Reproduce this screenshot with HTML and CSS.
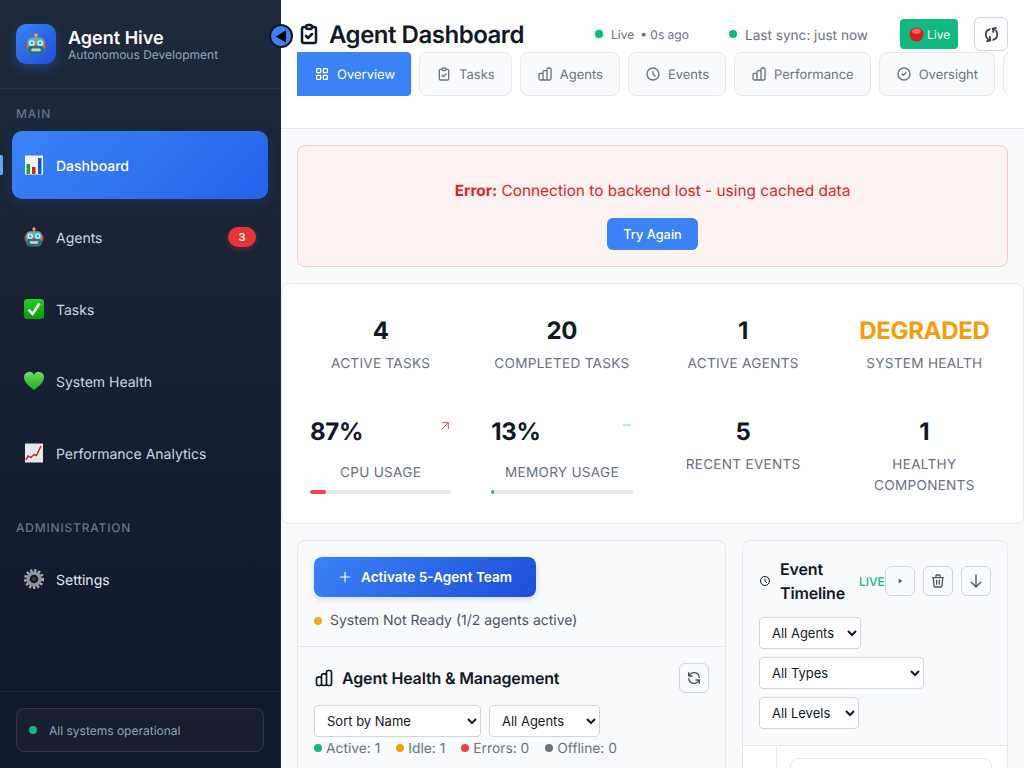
FILE: index.html

```html
<!DOCTYPE html>
<html lang="en">
<head>
  <meta charset="UTF-8" />
  <meta name="viewport" content="width=device-width, initial-scale=1" />
  <title>Agent Hive</title>
  <link rel="stylesheet" href="styles.css">
</head>
<body>

<svg class="defs" width="0" height="0">
  <linearGradient id="g-check" x1="0" y1="0" x2="0" y2="1"><stop offset="0" stop-color="#22cf22"/><stop offset="1" stop-color="#0a9a0a"/></linearGradient>
  <linearGradient id="g-heart" x1="0" y1="0" x2="0" y2="1"><stop offset="0" stop-color="#6fdc5a"/><stop offset="1" stop-color="#25a82a"/></linearGradient>
  <symbol id="robot" viewBox="0 0 24 24">
    <rect x="0.6" y="10" width="3" height="7" rx="1" fill="#b8442f"/>
    <rect x="20.4" y="10" width="3" height="7" rx="1" fill="#b8442f"/>
    <rect x="11" y="2.5" width="2" height="3" fill="#8a9aa3"/>
    <circle cx="12" cy="2.4" r="2" fill="#f0a030"/>
    <rect x="2.5" y="5" width="19" height="18" rx="5" fill="#6fa8ad"/>
    <rect x="2.5" y="14" width="19" height="9" rx="5" fill="#2f6f7c"/>
    <circle cx="7.5" cy="11" r="3.2" fill="#d8f0f5"/>
    <circle cx="16.5" cy="11" r="3.2" fill="#d8f0f5"/>
    <circle cx="7.5" cy="11" r="1.6" fill="#1fa8d8"/>
    <circle cx="16.5" cy="11" r="1.6" fill="#1fa8d8"/>
    <path d="M12 12l1.6 2.4h-3.2z" fill="#d8453a"/>
    <rect x="7" y="17" width="10" height="3" rx="1" fill="#c9d6d9"/>
  </symbol>
  <symbol id="i-clip" viewBox="0 0 24 24"><path d="M9 5H7a2 2 0 00-2 2v12a2 2 0 002 2h10a2 2 0 002-2V7a2 2 0 00-2-2h-2M9 5a2 2 0 002 2h2a2 2 0 002-2M9 5a2 2 0 012-2h2a2 2 0 012 2m-6 9l2 2 4-4"/></symbol>
  <symbol id="i-bars" viewBox="0 0 24 24"><path d="M9 19v-6a2 2 0 00-2-2H5a2 2 0 00-2 2v6a2 2 0 002 2h2a2 2 0 002-2zm0 0V9a2 2 0 012-2h2a2 2 0 012 2v10m-6 0a2 2 0 002 2h2a2 2 0 002-2m0 0V5a2 2 0 012-2h2a2 2 0 012 2v14a2 2 0 01-2 2h-2a2 2 0 01-2-2z"/></symbol>
  <symbol id="i-clock" viewBox="0 0 24 24"><path d="M12 8v4l3 3m6-3a9 9 0 11-18 0 9 9 0 0118 0z"/></symbol>
  <symbol id="i-check" viewBox="0 0 24 24"><path d="M9 12l2 2 4-4m6 2a9 9 0 11-18 0 9 9 0 0118 0z"/></symbol>
  <symbol id="i-refresh" viewBox="0 0 24 24"><path d="M4 4v5h.582m15.356 2A8.001 8.001 0 004.582 9m0 0H9m11 11v-5h-.581m0 0a8.003 8.003 0 01-15.357-2m15.357 2H15"/></symbol>
  <symbol id="i-grid" viewBox="0 0 24 24"><path d="M4 5a1 1 0 011-1h4a1 1 0 011 1v4a1 1 0 01-1 1H5a1 1 0 01-1-1V5zM14 5a1 1 0 011-1h4a1 1 0 011 1v4a1 1 0 01-1 1h-4a1 1 0 01-1-1V5zM4 15a1 1 0 011-1h4a1 1 0 011 1v4a1 1 0 01-1 1H5a1 1 0 01-1-1v-4zM14 15a1 1 0 011-1h4a1 1 0 011 1v4a1 1 0 01-1 1h-4a1 1 0 01-1-1v-4z"/></symbol>
</svg>

<div class="app">
  <aside class="sidebar">
    <div class="brand">
      <div class="brand-logo"><svg class="emoji-logo"><use href="#robot"/></svg></div>
      <div class="brand-text">
        <div class="brand-name">Agent Hive</div>
        <div class="brand-sub">Autonomous Development</div>
      </div>
    </div>

    <nav class="nav">
      <div class="nav-title">MAIN</div>
      <a class="nav-item active">
        <svg class="emoji" viewBox="0 0 20 20">
          <rect x="1" y="0.5" width="18" height="19" fill="#f4f6f8"/>
          <rect x="2.5" y="9" width="3.5" height="10" fill="#16a82e"/>
          <rect x="8" y="12" width="3.5" height="7" fill="#d3201c"/>
          <rect x="14" y="3" width="3.5" height="16" fill="#1258b8"/>
        </svg>
        <span class="nav-label">Dashboard</span>
      </a>
      <a class="nav-item">
        <svg class="emoji"><use href="#robot"/></svg>
        <span class="nav-label">Agents</span>
        <span class="nav-badge">3</span>
      </a>
      <a class="nav-item">
        <svg class="emoji" viewBox="0 0 20 20">
          <rect x="0" y="0" width="20" height="20" rx="3" fill="url(#g-check)"/>
          <path d="M4.5 10.500l4 4.500 7-10.500" fill="none" stroke="#fff" stroke-width="2.600"/>
        </svg>
        <span class="nav-label">Tasks</span>
      </a>
      <a class="nav-item">
        <svg class="emoji" viewBox="0 0 20 20">
          <path d="M10 19C4 14.500 0 11 0 6a5.200 5.200 0 0 1 10-2 5.200 5.200 0 0 1 10 2c0 5-4 8.500-10 13z" fill="url(#g-heart)"/>
        </svg>
        <span class="nav-label">System Health</span>
      </a>
      <a class="nav-item">
        <svg class="emoji" viewBox="0 0 20 20">
          <rect x="1" y="0.500" width="18" height="19" fill="#e6e9ec"/>
          <path d="M2 17l2-4 3 1.500 3-3 2.500 1L17 3" fill="none" stroke="#c4201c" stroke-width="1.400"/>
        </svg>
        <span class="nav-label">Performance Analytics</span>
      </a>
      <div class="nav-title nav-title-admin">ADMINISTRATION</div>
      <a class="nav-item nav-item-light">
        <svg class="emoji" viewBox="0 0 20 20">
          <circle cx="10" cy="10" r="8.500" fill="none" stroke="#a9adb1" stroke-width="3" stroke-dasharray="2.200 1.800"/>
          <circle cx="10" cy="10" r="6" fill="none" stroke="#8f9498" stroke-width="3.500"/>
          <circle cx="10" cy="10" r="2" fill="#3b3f44"/>
        </svg>
        <span class="nav-label">Settings</span>
      </a>
    </nav>

    <div class="side-foot">
      <div class="sys-status"><i class="sys-dot"></i>All systems operational</div>
    </div>
  </aside>

  <button class="collapse"><svg class="collapse-arrow" viewBox="0 0 11 14"><path d="M11 0v14L0 7z"/></svg></button>

  <main class="main">
    <header class="top">
      <div class="top-row">
        <svg class="ico title-ico"><use href="#i-clip"/></svg>
        <h1>Agent Dashboard</h1>
        <div class="live-state"><i class="dot-green glow"></i>Live<span class="ago">&bull; 0s ago</span></div>
        <div class="sync"><i class="dot-green"></i><span class="sync-text">Last sync: just now</span></div>
        <div class="live-pill">
          <svg class="red-ball" viewBox="0 0 16 16"><circle cx="8" cy="8" r="7.500" fill="#d81f1f"/><ellipse cx="8" cy="4.500" rx="4.500" ry="2.800" fill="#f56a5f"/></svg>
          Live
        </div>
        <button class="icon-btn sync-btn"><svg class="ico sync-ico"><use href="#i-refresh"/></svg></button>
      </div>
      <div class="tabs">
        <a class="tab active"><svg class="ico"><use href="#i-grid"/></svg>Overview</a>
        <a class="tab"><svg class="ico"><use href="#i-clip"/></svg>Tasks</a>
        <a class="tab"><svg class="ico"><use href="#i-bars"/></svg>Agents</a>
        <a class="tab"><svg class="ico"><use href="#i-clock"/></svg>Events</a>
        <a class="tab"><svg class="ico"><use href="#i-bars"/></svg>Performance</a>
        <a class="tab"><svg class="ico"><use href="#i-check"/></svg>Oversight</a>
        <a class="tab tab-last"></a>
      </div>
    </header>

    <section class="error-box">
      <p><strong>Error:</strong> Connection to backend lost - using cached data</p>
      <button class="btn-retry">Try Again</button>
    </section>

    <section class="stats">
      <div class="stat"><div class="stat-value">4</div><div class="stat-label">ACTIVE TASKS</div></div>
      <div class="stat"><div class="stat-value">20</div><div class="stat-label">COMPLETED TASKS</div></div>
      <div class="stat"><div class="stat-value">1</div><div class="stat-label">ACTIVE AGENTS</div></div>
      <div class="stat"><div class="stat-value amber">DEGRADED</div><div class="stat-label">SYSTEM HEALTH</div></div>

      <div class="stat">
        <div class="stat-head">
          <div class="stat-value">87%</div>
          <svg class="trend trend-up" viewBox="6 6 12 12"><path d="M7 17L17 7M7 7h10v10"/></svg>
        </div>
        <div class="stat-label meter-label">CPU USAGE</div>
        <div class="meter"><div class="meter-fill red" style="width: 11%"></div></div>
      </div>
      <div class="stat">
        <div class="stat-head">
          <div class="stat-value">13%</div>
          <svg class="trend trend-flat" viewBox="3 3 18 18"><path d="M3 12h18"/></svg>
        </div>
        <div class="stat-label meter-label">MEMORY USAGE</div>
        <div class="meter"><div class="meter-fill green" style="width: 2%"></div></div>
      </div>
      <div class="stat"><div class="stat-value">5</div><div class="stat-label">RECENT EVENTS</div></div>
      <div class="stat"><div class="stat-value">1</div><div class="stat-label">HEALTHY COMPONENTS</div></div>
    </section>

    <section class="panels">
      <div class="panel">
        <div class="activate">
          <button class="btn-activate"><svg class="ico" viewBox="0 0 24 24"><path d="M12 4v16m8-8H4"/></svg>Activate 5-Agent Team</button>
          <div class="ready"><i class="dot amber-bg"></i>System Not Ready (1/2 agents active)</div>
        </div>
        <div class="health">
          <div class="health-head">
            <svg class="ico health-ico"><use href="#i-bars"/></svg>
            <h2>Agent Health &amp; Management</h2>
            <button class="icon-btn small"><svg class="ico"><use href="#i-refresh"/></svg></button>
          </div>
          <div class="filters">
            <select class="sel sel-sort"><option>Sort by Name</option></select>
            <select class="sel sel-agents"><option>All Agents</option></select>
          </div>
          <div class="legend">
            <span><i class="dot green-bg"></i>Active: 1</span>
            <span><i class="dot amber-bg2"></i>Idle: 1</span>
            <span><i class="dot red-bg"></i>Errors: 0</span>
            <span><i class="dot gray-bg"></i>Offline: 0</span>
          </div>
        </div>
      </div>

      <div class="panel">
        <div class="timeline-head">
          <div class="timeline-top">
            <svg class="ico timeline-ico"><use href="#i-clock"/></svg>
            <h2>Event Timeline</h2>
            <span class="live-tag">LIVE</span>
            <div class="timeline-btns">
              <button class="icon-btn small"><svg class="play" viewBox="0 0 24 24"><path d="M8 5l11 7-11 7z"/></svg></button>
              <button class="icon-btn small"><svg class="ico" viewBox="0 0 24 24"><path d="M19 7l-.867 12.142A2 2 0 0116.138 21H7.862a2 2 0 01-1.995-1.858L5 7m5 4v6m4-6v6m1-10V4a1 1 0 00-1-1h-4a1 1 0 00-1 1v3M4 7h16"/></svg></button>
              <button class="icon-btn small"><svg class="ico" viewBox="0 0 24 24"><path d="M19 14l-7 7m0 0l-7-7m7 7V3"/></svg></button>
            </div>
          </div>
          <select class="sel sel-tl-agents"><option>All Agents</option></select>
          <select class="sel sel-tl-types"><option>All Types</option></select>
          <select class="sel sel-tl-levels"><option>All Levels</option></select>
        </div>
        <div class="timeline-body">
          <div class="event-card"></div>
        </div>
      </div>
    </section>
  </main>
</div>

</body>
</html>
```

FILE: styles.css

```css
* {
  box-sizing: border-box;
}
html, body {
  margin: 0;
  height: 100%;
  overflow: hidden;
}
body {
  font-family: Inter, "Noto Sans", sans-serif;
  text-rendering: geometricPrecision;
  background-color: #f9fafb;
  color: #111827;
}
.defs {
  position: absolute;
}
.app {
  display: flex;
  height: 768px;
  overflow: hidden;
}

/* sidebar */
.sidebar {
  width: 281px;
  flex: none;
  height: 768px;
  display: flex;
  flex-direction: column;
  background: linear-gradient(180deg, #1e293b 0%, #0f172a 100%);
  border-right: 1px solid #1e293b;
}
.brand {
  height: 89px;
  flex: none;
  display: flex;
  align-items: center;
  gap: 12px;
  padding: 0 16px;
  border-bottom: 1px solid rgba(255, 255, 255, 0.07);
}
.brand-logo {
  width: 40px;
  height: 40px;
  border-radius: 10px;
  display: flex;
  align-items: center;
  justify-content: center;
  background: linear-gradient(135deg, #3b82f6, #1d4ed8);
  box-shadow: 0 4px 12px rgba(59, 130, 246, 0.3);
}
.emoji-logo {
  width: 22px;
  height: 22px;
}
.brand-text {
  padding-top: 2px;
}
.brand-name {
  font-size: 18px;
  line-height: 20px;
  font-weight: 600;
  color: #fff;
}
.brand-sub {
  font-size: 12px;
  line-height: 12px;
  color: #94a3b8;
}
.nav {
  flex: 1;
  padding: 0 12px;
}
.nav-title {
  font-size: 12px;
  font-weight: 500;
  line-height: 16px;
  letter-spacing: 0.8px;
  color: #64748b;
  padding: 17px 4px 9px;
}
.nav-title-admin {
  padding-top: 29px;
  padding-bottom: 9px;
}
.nav-item {
  position: relative;
  height: 68px;
  margin-bottom: 4px;
  display: flex;
  align-items: center;
  gap: 12px;
  padding: 0 12px;
  border-radius: 10px;
  font-size: 14px;
  font-weight: 400;
  color: #cbd5e1;
}
.nav-label {
  margin-top: 2px;
}
.nav-item-light {
  color: #e2e8f0;
}
.nav-item.active {
  color: #fff;
  font-weight: 500;
  background: linear-gradient(135deg, #3b82f6, #2563eb);
  box-shadow: 0 4px 12px rgba(59, 130, 246, 0.15);
}
.nav-item.active::before {
  content: "";
  position: absolute;
  left: -12px;
  top: 24px;
  width: 3px;
  height: 20px;
  border-radius: 0 2px 2px 0;
  background: #60a5fa;
}
.emoji {
  width: 20px;
  height: 20px;
  flex: none;
}
.nav-badge {
  margin-left: auto;
  min-width: 28px;
  height: 20px;
  border-radius: 10px;
  background: #e53535;
  color: #fff;
  font-size: 11px;
  font-weight: 600;
  line-height: 20px;
  text-align: center;
  box-shadow: 0 2px 6px rgba(239, 68, 68, 0.3);
}
.side-foot {
  height: 77px;
  padding: 16px;
  border-top: 1px solid rgba(255, 255, 255, 0.07);
}
.sys-status {
  height: 44px;
  display: flex;
  align-items: center;
  gap: 12px;
  padding: 0 12px;
  border: 1px solid rgba(255, 255, 255, 0.1);
  border-radius: 8px;
  background: rgba(255, 255, 255, 0.03);
  font-size: 12px;
  color: #94a3b8;
}
.sys-dot {
  width: 8px;
  height: 8px;
  border-radius: 50%;
  background: #10b981;
}
.collapse {
  position: absolute;
  left: 269px;
  top: 24px;
  z-index: 5;
  width: 24px;
  height: 24px;
  padding: 0 1px 0 0;
  display: flex;
  align-items: center;
  justify-content: center;
  border: 2px solid #111827;
  border-radius: 50%;
  background: #3b82f6;
}
.collapse-arrow {
  width: 10px;
  height: 13px;
  fill: #000;
}

/* main */
.main {
  flex: 1;
  min-width: 0;
  height: 768px;
  overflow: hidden;
  background: #f9fafb;
}
.top {
  height: 129px;
  padding: 16px 16px 0;
  background: #fff;
  border-bottom: 1px solid #e5e7eb;
}
.top-row {
  height: 36px;
  display: flex;
  align-items: center;
}
.ico {
  width: 16px;
  height: 16px;
  flex: none;
  fill: none;
  stroke: currentColor;
  stroke-width: 2;
  stroke-linecap: round;
  stroke-linejoin: round;
}
.title-ico {
  width: 24px;
  height: 24px;
  stroke-width: 2.500;
  color: #111827;
  margin-right: 8px;
}
h1 {
  margin: 0;
  font-size: 24px;
  font-weight: 600;
  letter-spacing: -0.48px;
  color: #111827;
  width: 266px;
}
.live-state {
  display: flex;
  align-items: center;
  font-size: 12px;
  color: #6b7280;
  width: 134px;
}
.ago {
  margin-left: 6px;
}
.dot-green {
  width: 8px;
  height: 8px;
  border-radius: 50%;
  background: #10b981;
  margin-right: 8px;
}
.glow {
  box-shadow: 0 0 4px rgba(16, 185, 129, 0.5);
}
.sync {
  display: flex;
  align-items: center;
  font-size: 13.600px;
  color: #6b7280;
  width: 171px;
}
.sync-text {
  margin-top: 3px;
}
.live-pill {
  width: 58px;
  height: 30px;
  display: flex;
  align-items: center;
  gap: 3px;
  padding: 0 9px;
  border-radius: 4px;
  background: #10b981;
  color: #fff;
  font-size: 12px;
}
.red-ball {
  width: 15px;
  height: 15px;
  flex: none;
}
.icon-btn {
  display: flex;
  align-items: center;
  justify-content: center;
  padding: 0;
  background: #fff;
  border: 1px solid #d1d5db;
  border-radius: 6px;
  color: #374151;
}
.sync-btn {
  width: 34px;
  height: 34px;
  margin-left: 16px;
}
.sync-ico {
  width: 17px;
  height: 17px;
  stroke-width: 2.400;
  transform: rotate(80deg);
}
.tabs {
  display: flex;
  gap: 8px;
  overflow: hidden;
  width: 711px;
}
.tab {
  flex: none;
  height: 44px;
  display: flex;
  align-items: center;
  gap: 7px;
  padding: 2px 16px 0;
  border: 1px solid #e5e7eb;
  border-radius: 8px;
  background: #f9fafb;
  font-size: 13px;
  color: #6b7280;
}
.tab .ico {
  margin-top: -2px;
}
.tab.active {
  color: #fff;
  background: #3b82f6;
  border-color: #3b82f6;
  border-radius: 0 4px 4px 0;
  padding-right: 15px;
  box-shadow: 0 0 0 1px rgba(59, 130, 246, 0.15);
}
.tab-last {
  width: 40px;
}

/* error */
.error-box {
  margin: 16px;
  height: 122px;
  padding-top: 35px;
  text-align: center;
  background: #fef2f2;
  border: 1px solid #fecaca;
  border-radius: 8px;
  font-size: 15.400px;
  color: #dc2626;
}
.error-box p {
  margin: 0 0 17px;
  line-height: 20px;
}
.btn-retry {
  width: 91px;
  height: 32px;
  border: 0;
  border-radius: 6px;
  background: #3b82f6;
  color: #fff;
  font-family: inherit;
  font-size: 12.800px;
  font-weight: 500;
}

/* stats */
.stats {
  display: grid;
  grid-template-columns: repeat(4, 1fr);
  grid-template-rows: 101px 100px;
  height: 241px;
  padding: 8px;
  background: #fff;
  border: 1px solid #e5e7eb;
  border-radius: 8px;
}
.stat {
  padding: 23px 20px 0;
  text-align: center;
}
.stat-value {
  font-size: 24px;
  line-height: 32px;
  font-weight: 700;
  letter-spacing: -0.3px;
  color: #111827;
}
.stat-value.amber {
  color: #f59e0b;
}
.stat-label {
  margin-top: 7px;
  font-size: 13.600px;
  line-height: 21px;
  color: #6b7280;
  letter-spacing: 0.27px;
}
.meter-label {
  margin-top: 15px;
}
.stat-head {
  display: flex;
  justify-content: space-between;
  align-items: flex-start;
}
.trend {
  width: 8px;
  height: 8px;
  margin-top: 6px;
  margin-right: 2px;
  fill: none;
}
.trend-up {
  stroke: #ef4444;
  stroke-width: 1.400;
}
.trend-flat {
  stroke: #10b981;
  stroke-width: 3;
  opacity: 0.4;
  margin-top: 5px;
}
.meter {
  margin-top: 6px;
  height: 4px;
  border-radius: 2px;
  background: #e5e7eb;
  overflow: hidden;
}
.meter-fill {
  height: 100%;
  border-radius: 2px;
}
.meter-fill.red {
  background: #ef4444;
}
.meter-fill.green {
  background: #10b981;
}

/* panels */
.panels {
  display: grid;
  grid-template-columns: 429px 266px;
  gap: 16px;
  padding: 16px;
  align-items: start;
}
.panel {
  background: #f9fafb;
  border: 1px solid #e5e7eb;
  border-radius: 8px;
  overflow: hidden;
  height: 400px;
}
.activate {
  height: 106px;
  padding: 16px;
  border-bottom: 1px solid #e5e7eb;
}
.btn-activate {
  width: 222px;
  height: 40px;
  display: flex;
  align-items: center;
  justify-content: center;
  gap: 9px;
  border: 0;
  border-radius: 8px;
  background: linear-gradient(135deg, #3b82f6, #1d4ed8);
  box-shadow: 0 2px 6px rgba(59, 130, 246, 0.25);
  color: #fff;
  font-family: inherit;
  font-size: 13.600px;
  font-weight: 600;
}
.btn-activate .ico {
  width: 14px;
  height: 14px;
}
.ready {
  display: flex;
  align-items: center;
  gap: 8px;
  margin-top: 15px;
  font-size: 14px;
  line-height: 18px;
  color: #4b5563;
}
.dot {
  display: inline-block;
  width: 8px;
  height: 8px;
  border-radius: 50%;
}
.amber-bg {
  background: #f5a623;
}
.amber-bg2 {
  background: #f59e0b;
}
.green-bg {
  background: #10b981;
}
.red-bg {
  background: #ef4444;
}
.gray-bg {
  background: #6b7280;
}
.health {
  padding: 16px;
}
.health-head {
  display: flex;
  align-items: center;
}
.health-ico {
  width: 20px;
  height: 20px;
  color: #111827;
  margin-right: 8px;
}
h2 {
  margin: 0;
  font-size: 16px;
  font-weight: 600;
  line-height: 24px;
  letter-spacing: -0.16px;
  color: #111827;
}
.small {
  width: 30px;
  height: 30px;
  border-color: #d1d5db;
  background: #f9fafb;
  color: #4b5563;
}
.health-head .small {
  margin-left: auto;
}
.filters {
  display: flex;
  gap: 8px;
  margin-top: 12px;
}
.sel {
  display: block;
  height: 32px;
  padding: 0 8px;
  background: #fff;
  border: 1px solid #d1d5db;
  border-radius: 4px;
  font-family: inherit;
  font-size: 13px;
  color: #111827;
}
.sel-sort {
  width: 167px;
}
.sel-agents {
  width: 111px;
}
.legend {
  display: flex;
  gap: 16px;
  margin-top: 3px;
  font-size: 13.800px;
  line-height: 18px;
  color: #6b7280;
}
.legend .dot {
  margin-right: 4px;
  position: relative;
  top: -1px;
}
.timeline-head {
  height: 205px;
  padding: 16px;
  border-bottom: 1px solid #e5e7eb;
}
.timeline-top {
  display: flex;
  align-items: center;
  margin-bottom: 12px;
}
.timeline-ico {
  width: 12px;
  height: 12px;
  color: #111827;
  margin-right: 9px;
}
.timeline-top h2 {
  width: 79px;
}
.live-tag {
  font-size: 12px;
  font-weight: 500;
  color: #10b981;
  width: 26px;
}
.timeline-btns {
  display: flex;
  gap: 8px;
  margin-left: auto;
}
.play {
  width: 8px;
  height: 8px;
  fill: #4b5563;
}
.timeline-head .sel {
  margin-bottom: 8px;
}
.sel-tl-agents {
  width: 102px;
}
.sel-tl-types {
  width: 165px;
}
.sel-tl-levels {
  width: 100px;
}
.timeline-body {
  height: 200px;
  background: #fff;
  padding: 12px 15px 0 47px;
  position: relative;
}
.timeline-body::before {
  content: "";
  position: absolute;
  left: 33px;
  top: 0;
  bottom: 0;
  width: 1px;
  background: #e5e7eb;
}
.event-card {
  height: 100px;
  border: 1px solid #e5e7eb;
  border-radius: 8px;
  background: #fff;
}
```
